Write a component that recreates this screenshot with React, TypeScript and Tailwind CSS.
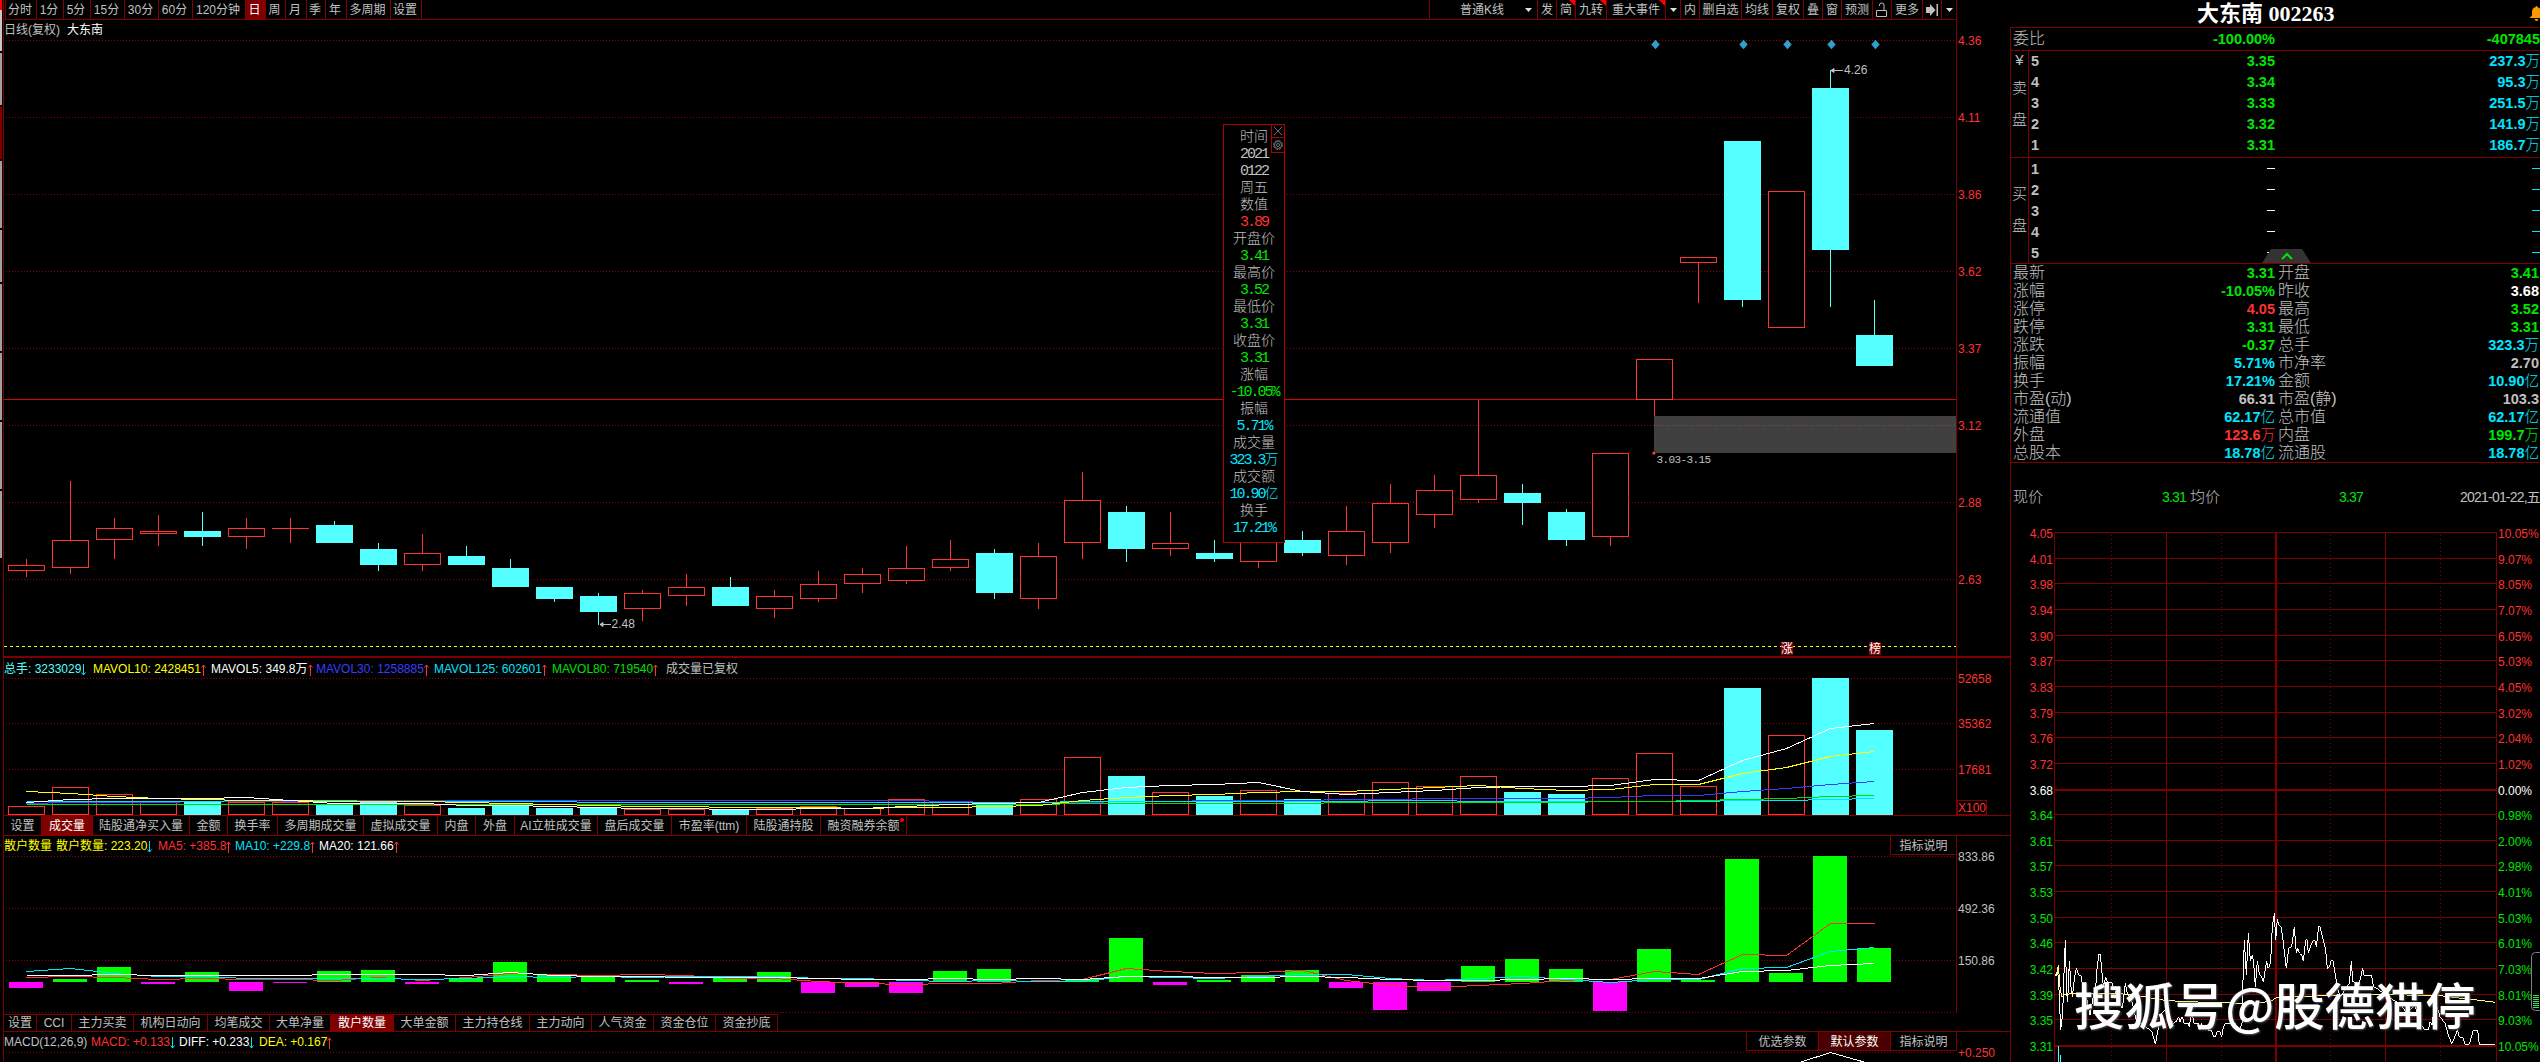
import React from "react";
import clsx from "clsx";

const periods = [
  { label: "分时", w: "w-[31px]" },
  { label: "1分", w: "w-[27px]" },
  { label: "5分", w: "w-[27px]" },
  { label: "15分", w: "w-[34px]" },
  { label: "30分", w: "w-[34px]" },
  { label: "60分", w: "w-[34px]" },
  { label: "120分钟", w: "w-[53px]" },
  { label: "日", w: "w-[20px]", active: true },
  { label: "周", w: "w-[20px]" },
  { label: "月", w: "w-[21px]" },
  { label: "季", w: "w-[19px]" },
  { label: "年", w: "w-[21px]" },
  { label: "多周期", w: "w-[44px]" },
  { label: "设置", w: "w-[31px]" },
];

const tools = [
  { label: "发", w: "w-[19px]" },
  { label: "简", w: "w-[19px]", mark: true },
  { label: "九转", w: "w-[31px]", mark: true },
  { label: "重大事件", w: "w-[59px]", mark: true },
  { icon: "down", w: "w-[15px]" },
  { label: "内", w: "w-[19px]" },
  { label: "删自选", w: "w-[42px]" },
  { label: "均线", w: "w-[31px]" },
  { label: "复权", w: "w-[31px]" },
  { label: "叠", w: "w-[19px]" },
  { label: "窗", w: "w-[19px]" },
  { label: "预测", w: "w-[31px]" },
  { icon: "lock", w: "w-[19px]" },
  { label: "更多", w: "w-[31px]" },
  { icon: "end", w: "w-[19px]" },
  { icon: "down", w: "w-[15px]" },
];

const volumeTabs = [
  { label: "设置", w: "w-[38px]" },
  { label: "成交量", w: "w-[51px]", active: true },
  { label: "陆股通净买入量", w: "w-[97px]" },
  { label: "金额", w: "w-[38px]" },
  { label: "换手率", w: "w-[50px]" },
  { label: "多周期成交量", w: "w-[86px]" },
  { label: "虚拟成交量", w: "w-[74px]" },
  { label: "内盘", w: "w-[38px]" },
  { label: "外盘", w: "w-[39px]" },
  { label: "AI立桩成交量", w: "w-[83px]" },
  { label: "盘后成交量", w: "w-[74px]" },
  { label: "市盈率(ttm)", w: "w-[75px]" },
  { label: "陆股通持股", w: "w-[74px]" },
  { label: "融资融券余额", w: "w-[86px]", dot: true },
];

const indicatorTabs = [
  { label: "设置", w: "w-[33px]" },
  { label: "CCI", w: "w-[35px]" },
  { label: "主力买卖", w: "w-[62px]" },
  { label: "机构日动向", w: "w-[74px]" },
  { label: "均笔成交", w: "w-[62px]" },
  { label: "大单净量", w: "w-[61px]" },
  { label: "散户数量", w: "w-[63px]", active: true },
  { label: "大单金额", w: "w-[62px]" },
  { label: "主力持仓线", w: "w-[74px]" },
  { label: "主力动向", w: "w-[62px]" },
  { label: "人气资金", w: "w-[62px]" },
  { label: "资金仓位", w: "w-[62px]" },
  { label: "资金抄底", w: "w-[62px]" },
];

// [up, wickTop, bodyTop, bodyBottom, wickBottom]
const candles: [number, number, number, number, number][] = [
  [1, 559, 565, 571, 577],
  [1, 481, 540, 568, 574],
  [1, 518, 528, 540, 559],
  [1, 515, 531, 534, 546],
  [0, 512, 531, 537, 546],
  [1, 518, 528, 537, 549],
  [1, 518, 528, 529, 543],
  [0, 521, 525, 543, 543],
  [0, 543, 549, 565, 571],
  [1, 534, 553, 565, 571],
  [0, 546, 556, 565, 565],
  [0, 559, 568, 587, 587],
  [0, 587, 587, 599, 602],
  [0, 593, 596, 612, 625],
  [1, 590, 593, 609, 621],
  [1, 574, 587, 596, 606],
  [0, 577, 587, 606, 606],
  [1, 590, 596, 609, 618],
  [1, 571, 584, 599, 602],
  [1, 568, 574, 584, 593],
  [1, 546, 568, 581, 584],
  [1, 540, 559, 568, 571],
  [0, 549, 553, 593, 599],
  [1, 543, 556, 599, 609],
  [1, 472, 500, 543, 559],
  [0, 506, 512, 549, 562],
  [1, 512, 543, 549, 556],
  [0, 540, 553, 559, 562],
  [1, 540, 540, 562, 568],
  [0, 531, 540, 553, 556],
  [1, 506, 531, 556, 565],
  [1, 484, 503, 543, 553],
  [1, 475, 490, 515, 528],
  [1, 400, 475, 500, 503],
  [0, 484, 493, 503, 525],
  [0, 509, 512, 540, 546],
  [1, 453, 453, 537, 546],
  [1, 359, 359, 400, 416],
  [1, 257, 257, 263, 303],
  [0, 141, 141, 300, 307],
  [1, 191, 191, 328, 328],
  [0, 70, 88, 250, 307],
  [0, 300, 335, 366, 366],
];

const volumeTops = [
  806, 787, 794, 802, 802, 802, 802, 805, 802, 805, 808, 806, 808, 808, 809,
  809, 810, 808, 806, 808, 799, 802, 802, 799, 757, 776, 792, 796, 790, 799,
  793, 782, 786, 776, 792, 794, 778, 753, 786, 688, 735, 678, 730,
];

// end of each bar, measured against the zero line at 982
const retailEnds = [
  988, 979, 967, 984, 972, 991, 983, 971, 970, 984, 978, 962, 974, 976, 980,
  984, 978, 972, 993, 987, 993, 971, 969, 982, 979, 938, 985, 980, 975, 970,
  988, 1010, 991, 966, 959, 969, 1011, 949, 980, 859, 973, 856, 948,
];

const volumeLines = [
  {
    color: "#3c3cff",
    ys: [803, 802, 802, 802, 801, 801, 801, 801, 800, 800, 800, 800, 800, 800, 800, 800, 800, 800, 800, 800, 800, 801, 802, 802, 802, 801, 801, 800, 800, 800, 799, 799, 798, 798, 798, 798, 797, 795, 795, 791, 788, 784, 781],
  },
  {
    color: "#00e5ff",
    ys: [801, 801, 801, 801, 801, 800, 800, 800, 801, 801, 801, 801, 801, 802, 802, 802, 802, 802, 802, 802, 802, 802, 802, 802, 801, 801, 801, 801, 801, 801, 801, 800, 800, 801, 801, 801, 801, 801, 801, 800, 800, 799, 798],
  },
  {
    color: "#00e000",
    ys: [804, 804, 804, 804, 804, 804, 804, 804, 804, 804, 804, 804, 804, 804, 804, 804, 804, 804, 804, 804, 804, 804, 804, 804, 803, 803, 803, 803, 803, 803, 802, 802, 802, 802, 802, 802, 801, 801, 800, 799, 798, 796, 795],
  },
  {
    color: "#ffff00",
    ys: [791, 793, 796, 798, 799, 800, 800, 801, 801, 801, 802, 803, 804, 805, 806, 806, 807, 807, 807, 808, 807, 807, 806, 805, 800, 797, 795, 794, 792, 791, 791, 789, 787, 785, 788, 790, 789, 784, 784, 773, 767, 756, 751],
  },
  {
    color: "#ffffff",
    ys: [802, 799, 798, 798, 798, 797, 800, 803, 803, 803, 805, 805, 806, 807, 808, 808, 809, 809, 808, 808, 806, 804, 803, 802, 792, 787, 785, 784, 782, 791, 794, 792, 790, 787, 786, 786, 785, 779, 780, 760, 748, 728, 723],
  },
];

const retailLines = [
  {
    color: "#ff3232",
    ys: [977, 976, 977, 979, 978, 979, 979, 980, 977, 980, 977, 973, 974, 975, 974, 975, 978, 978, 981, 983, 984, 983, 983, 980, 979, 968, 971, 973, 972, 970, 980, 985, 987, 985, 983, 980, 979, 971, 974, 954, 955, 923, 923],
  },
  {
    color: "#00e5ff",
    ys: [971, 968, 973, 976, 976, 978, 978, 978, 978, 979, 978, 976, 977, 976, 977, 976, 976, 976, 978, 978, 980, 981, 980, 981, 981, 976, 977, 978, 976, 974, 974, 978, 980, 978, 976, 979, 982, 979, 979, 968, 967, 951, 947],
  },
  {
    color: "#ffffff",
    ys: [975, 975, 974, 975, 975, 975, 975, 974, 974, 974, 975, 972, 975, 976, 976, 977, 977, 977, 978, 979, 979, 978, 979, 978, 979, 976, 976, 977, 977, 976, 977, 979, 980, 980, 979, 978, 979, 978, 978, 971, 970, 965, 963],
  },
];

const toPoints = (ys: number[]) =>
  ys.map((y, i) => `${26.5 + 44 * i},${y + 0.5}`).join(" ");

const popupRows = [
  ["时间", "text-[#c0c0c0]"],
  ["2021", "text-[#c0c0c0]"],
  ["0122", "text-[#c0c0c0]"],
  ["周五", "text-[#c0c0c0]"],
  ["数值", "text-[#c0c0c0]"],
  ["3.89", "text-[#ff3232]"],
  ["开盘价", "text-[#c0c0c0]"],
  ["3.41", "text-[#00e600]"],
  ["最高价", "text-[#c0c0c0]"],
  ["3.52", "text-[#00e600]"],
  ["最低价", "text-[#c0c0c0]"],
  ["3.31", "text-[#00e600]"],
  ["收盘价", "text-[#c0c0c0]"],
  ["3.31", "text-[#00e600]"],
  ["涨幅", "text-[#c0c0c0]"],
  ["-10.05%", "text-[#00e600]"],
  ["振幅", "text-[#c0c0c0]"],
  ["5.71%", "text-[#00e5ff]"],
  ["成交量", "text-[#c0c0c0]"],
  ["323.3万", "text-[#00e5ff]"],
  ["成交额", "text-[#c0c0c0]"],
  ["10.90亿", "text-[#00e5ff]"],
  ["换手", "text-[#c0c0c0]"],
  ["17.21%", "text-[#00e5ff]"],
];

const sells = [
  ["5", "3.35", "237.3万"],
  ["4", "3.34", "95.3万"],
  ["3", "3.33", "251.5万"],
  ["2", "3.32", "141.9万"],
  ["1", "3.31", "186.7万"],
];

const G = "text-[#00e600]";
const R = "text-[#ff3232]";
const C = "text-[#00e5ff]";
const S = "text-[#c0c0c0]";

const stats = [
  ["最新", "3.31", G, "开盘", "3.41", G],
  ["涨幅", "-10.05%", G, "昨收", "3.68", "text-white"],
  ["涨停", "4.05", R, "最高", "3.52", G],
  ["跌停", "3.31", G, "最低", "3.31", G],
  ["涨跌", "-0.37", G, "总手", "323.3万", C],
  ["振幅", "5.71%", C, "市净率", "2.70", S],
  ["换手", "17.21%", C, "金额", "10.90亿", C],
  ["市盈(动)", "66.31", S, "市盈(静)", "103.3", S],
  ["流通值", "62.17亿", C, "总市值", "62.17亿", C],
  ["外盘", "123.6万", R, "内盘", "199.7万", G],
  ["总股本", "18.78亿", C, "流通股", "18.78亿", C],
];

const minuteScale = [
  ["4.05", "10.05%"],
  ["4.01", "9.07%"],
  ["3.98", "8.05%"],
  ["3.94", "7.07%"],
  ["3.90", "6.05%"],
  ["3.87", "5.03%"],
  ["3.83", "4.05%"],
  ["3.79", "3.02%"],
  ["3.76", "2.04%"],
  ["3.72", "1.02%"],
  ["3.68", "0.00%"],
  ["3.64", "0.98%"],
  ["3.61", "2.00%"],
  ["3.57", "2.98%"],
  ["3.53", "4.01%"],
  ["3.50", "5.03%"],
  ["3.46", "6.01%"],
  ["3.42", "7.03%"],
  ["3.39", "8.01%"],
  ["3.35", "9.03%"],
  ["3.31", "10.05%"],
];

const minutePrice =
  "45,257 50,255 53,240 57,300 62,420 68,370 73,220 76,150 80,310 83,335 88,213 93,290 97,320 104,260 109,235 116,255 123,258 128,290 135,300 150,375 158,330 168,280 172,225 177,193 181,193 185,240 190,290 197,262 203,278 215,278 225,300 235,330 247,355 256,280 262,310 275,330 285,375 292,400 305,400 318,410 330,421 336,425 346,463 352,430 366,370 375,360 385,360 390,385 400,400 408,395 416,380 420,395 427,380 432,400 445,400 448,412 452,380 458,380 462,400 475,400 480,420 484,400 490,420 497,408 505,420 515,421 520,440 526,440 532,425 540,425 545,440 550,410 556,400 585,400 592,420 600,418 606,400 608,300 613,150 619,255 625,130 631,213 637,195 641,220 646,290 652,213 658,252 664,258 670,276 680,213 684,235 688,232 692,213 697,110 703,70 707,150 712,88 717,105 723,110 729,150 739,235 746,175 755,170 763,110 769,190 773,175 779,190 785,195 790,213 797,150 801,150 805,190 815,160 820,150 826,152 829,172 836,108 840,110 850,150 857,180 862,235 868,232 873,213 879,213 885,250 893,295 900,320 915,300 928,280 934,213 938,275 950,278 957,285 968,235 972,255 995,257 1000,290 1015,298 1030,310 1060,330 1080,340 1100,370 1125,345 1140,400 1155,420 1165,420 1170,395 1176,405 1185,330 1200,380 1215,400 1222,425 1235,463 1252,421 1258,440 1270,445 1274,463 1288,463 1300,421 1313,421 1318,463 1365,463";

const minuteAverage =
  "45,257 50,250 55,225 60,290 65,320 75,314 100,310 250,312 300,318 345,326 375,331 420,334 500,337 610,340 690,335 710,323 780,320 860,316 1000,313 1200,317 1290,328 1320,331 1365,337";

function ToolIcon({ icon }: { icon?: string }) {
  if (icon === "lock") {
    return (
      <svg className="h-4 w-3" viewBox="0 0 12 16" fill="none" stroke="#c0c0c0">
        <path d="M.5 8.500h10v6H.5z M3.500 4V3q0-2 2.200-2T8 3v5" />
      </svg>
    );
  }
  if (icon === "end") {
    return (
      <svg className="h-3 w-3" viewBox="0 0 12 12" fill="#c0c0c0">
        <path d="M0 3h4V0l5.500 6L4 12V9H0z M10.500 0h1.500v12h-1.500z" />
      </svg>
    );
  }
  return (
    <svg className="h-1 w-[7px]" viewBox="0 0 7 4" fill="#e0e0e0">
      <path d="M0 0h7L3.500 4z" />
    </svg>
  );
}

function TopBar() {
  return (
    <div className="flex h-5 w-[1953px] justify-between border-r border-b border-[#800000] pl-px">
      <div className="flex border-r border-[#800000]">
        {periods.map((p) => (
          <div
            key={p.label}
            className={clsx(
              "flex items-center justify-center border-l border-[#800000] pr-0.5",
              p.w,
              p.active && "bg-[#800000] text-white"
            )}
          >
            {p.label}
          </div>
        ))}
      </div>
      <div className="flex">
        <div className="flex w-[108px] items-center justify-between border-l border-[#800000] pr-[5px] pl-[30px]">
          普通K线
          <ToolIcon />
        </div>
        {tools.map((t, i) => (
          <div
            key={i}
            className={clsx(
              "relative flex items-center justify-center border-l border-[#800000]",
              t.w
            )}
          >
            {t.label ?? <ToolIcon icon={t.icon} />}
            {t.mark && (
              <svg className="absolute top-0 right-0 h-1.5 w-1.5" viewBox="0 0 6 6">
                <path d="M0 0h6v6z" fill="#ff0000" />
              </svg>
            )}
          </div>
        ))}
      </div>
    </div>
  );
}

function Grid({ ys, color = "#900000" }: { ys: number[]; color?: string }) {
  return (
    <>
      {ys.map((y) => (
        <line key={y} x1="6" x2="1955" y1={y + 0.5} y2={y + 0.5} stroke={color} strokeDasharray="1 2" />
      ))}
    </>
  );
}

function AxisLabels({ items, fill }: { items: [number, string][]; fill: string }) {
  return (
    <g fill={fill}>
      {items.map(([y, label]) => (
        <text key={y} x="1958" y={y + 5}>
          {label}
        </text>
      ))}
    </g>
  );
}

function MainChart() {
  const grid = [40, 117, 194, 271, 348, 425, 502, 579];
  return (
    <svg className="h-[620px] w-[2006px] overflow-visible text-[12px]" viewBox="4 36 2006 620" shapeRendering="crispEdges">
      <Grid ys={grid} />
      <line x1="1956.500" x2="1956.500" y1="36" y2="656" stroke="#800000" />
      <line x1="4" x2="1956" y1="399.500" y2="399.500" stroke="#e00000" />
      {candles.map(([up, wt, bt, bb, wb], i) => {
        const x = 8 + 44 * i;
        const color = up ? "#ff3232" : "#54ffff";
        return (
          <g key={i} stroke={color}>
            {wt < bt && <line x1={x + 18.5} x2={x + 18.5} y1={wt} y2={bt} />}
            {wb > bb && <line x1={x + 18.5} x2={x + 18.5} y1={bb} y2={wb} />}
            {up ? (
              <rect x={x + 0.5} y={bt + 0.5} width="36" height={Math.max(bb - bt - 1, 0.01)} fill="#000" />
            ) : (
              <rect x={x} y={bt} width="37" height={bb - bt} fill={color} stroke="none" />
            )}
          </g>
        );
      })}
      <rect x="1654" y="416" width="302" height="37" fill="#404040" />
      <line x1="1654" x2="1956" y1="425.500" y2="425.500" stroke="#8a4a4a" strokeDasharray="1 2" />
      <circle cx="1654" cy="453" r="1.500" fill="#808080" stroke="#a00000" />
      {[37, 39, 40, 41, 42].map((i) => (
        <path
          key={i}
          transform={`translate(${27.5 + 44 * i} 44.500)`}
          d="M0-4.700 4.200 0 0 4.700-4.200 0z"
          fill="#2f9fcc"
          shapeRendering="auto"
        />
      ))}
      <g stroke="#c0c0c0" fill="#c0c0c0" shapeRendering="auto">
        <path d="M1831 70.500h12M1831 70.500l3-2v4z" />
        <path d="M600 624.500h11M600 624.500l3-2v4z" />
      </g>
      <g fill="#c0c0c0">
        <text x="1844" y="74">4.26</text>
        <text x="611.500" y="628">2.48</text>
        <text x="1656.500" y="463" className="font-['Liberation_Mono',monospace] text-[11px] tracking-[-0.6px]">
          3.03-3.15
        </text>
      </g>
      <line x1="4" x2="1956" y1="646.500" y2="646.500" stroke="#ffff00" strokeDasharray="3 3" />
      <rect x="1781" y="642" width="12" height="13" fill="#800000" />
      <rect x="1869" y="642" width="12" height="13" fill="#800000" />
      <g fill="#fff" textAnchor="middle" className="text-[12px]">
        <text x="1787" y="653">涨</text>
        <text x="1875" y="653">榜</text>
      </g>
      <AxisLabels
        fill="#ff3232"
        items={[
          [40, "4.36"],
          [117, "4.11"],
          [194, "3.86"],
          [271, "3.62"],
          [348, "3.37"],
          [425, "3.12"],
          [502, "2.88"],
          [579, "2.63"],
        ]}
      />
    </svg>
  );
}

function Popup() {
  return (
    <div className="absolute top-[124px] left-[1223px] h-[419px] w-[62px] border border-[#b00000] bg-black pt-1 text-center font-['Liberation_Mono','Noto_Sans_CJK_SC',monospace] text-[14px] leading-[17px] font-light">
      {popupRows.map(([label, color], i) => (
        <div
          key={i}
          className={clsx("h-[17px] whitespace-nowrap", color, /\d/.test(label) && "text-[15px] tracking-[-2px]")}
        >
          {label.replace(/[万亿]/, "")}
          {/\d[万亿]/.test(label) && <span className="text-[14px] tracking-normal">{label.slice(-1)}</span>}
        </div>
      ))}
      <div className="absolute -top-px -right-px flex w-[14px] flex-col border border-[#b00000] bg-black">
        <svg className="h-3 w-3" viewBox="0 0 12 12" stroke="#707070" fill="none">
          <path d="M2 2l8 8M10 2l-8 8" />
        </svg>
        <svg className="h-[15px] w-3 border-t border-[#b00000]" viewBox="0 0 12 14" stroke="#707070" fill="none">
          <circle cx="6" cy="7" r="4.500" strokeDasharray="2.500 1" />
          <circle cx="6" cy="7" r="3.500" />
          <circle cx="6" cy="7" r="1.500" />
        </svg>
      </div>
    </div>
  );
}

function Arrow({ up }: { up?: boolean }) {
  return (
    <svg className="mt-0.5 h-3 w-[5px] shrink-0" viewBox="0 0 5 12" fill="none" stroke={up ? "#ff3232" : "#00e5ff"}>
      <path d={up ? "M2.500 12V1M.5 3.500l2-2.500 2 2.500" : "M2.500 0v11M.5 8.500l2 2.500 2-2.500"} />
    </svg>
  );
}

function Reading({ text, color, w, up }: { text: string; color: string; w: string; up?: boolean }) {
  return (
    <div className={clsx("flex items-center whitespace-nowrap", color, w)}>
      {text}
      <Arrow up={up} />
    </div>
  );
}

function Tabs({ items }: { items: { label: string; w: string; active?: boolean; dot?: boolean }[] }) {
  return (
    <>
      {items.map((t) => (
        <div
          key={t.label}
          className={clsx(
            "relative flex items-center justify-center border-r border-[#800000] whitespace-nowrap",
            t.w,
            t.active && "bg-[#800000] text-white"
          )}
        >
          {t.label}
          {t.dot && <span className="absolute top-0.5 right-0.5 h-1 w-1 rounded-full bg-[#ff0000]" />}
        </div>
      ))}
    </>
  );
}

function VolumeChart() {
  return (
    <svg className="h-[138px] w-[2006px] overflow-visible text-[12px]" viewBox="4 677 2006 138" shapeRendering="crispEdges">
      <Grid ys={[678, 723, 769]} />
      <line x1="1956.500" x2="1956.500" y1="677" y2="815" stroke="#800000" />
      {volumeTops.map((y, i) =>
        candles[i][0] ? (
          <rect key={i} x={8.5 + 44 * i} y={y + 0.5} width="36" height={814 - y} fill="#000" stroke="#ff3232" />
        ) : (
          <rect key={i} x={8 + 44 * i} y={y} width="37" height={815 - y} fill="#54ffff" />
        )
      )}
      {volumeLines.map((l) => (
        <polyline key={l.color} points={toPoints(l.ys)} fill="none" stroke={l.color} />
      ))}
      <rect x="1957.500" y="800.500" width="29" height="14" fill="none" stroke="#800000" />
      <AxisLabels
        fill="#ff3232"
        items={[
          [678, "52658"],
          [723, "35362"],
          [769, "17681"],
          [807, "X100"],
        ]}
      />
    </svg>
  );
}

function RetailChart() {
  return (
    <svg className="h-[159px] w-[2006px] overflow-visible text-[12px]" viewBox="4 855 2006 159" shapeRendering="crispEdges">
      <Grid ys={[856, 908, 960, 1012]} />
      <line x1="1956.500" x2="1956.500" y1="855" y2="1013" stroke="#800000" />
      {retailEnds.map((y, i) => (
        <rect
          key={i}
          x={9 + 44 * i}
          y={Math.min(y, 982)}
          width="34"
          height={Math.abs(y - 982)}
          fill={y < 982 ? "#00ff00" : "#ff00ff"}
        />
      ))}
      {retailLines.map((l) => (
        <polyline key={l.color} points={toPoints(l.ys)} fill="none" stroke={l.color} />
      ))}
      <AxisLabels
        fill="#c0c0c0"
        items={[
          [856, "833.86"],
          [908, "492.36"],
          [960, "150.86"],
        ]}
      />
    </svg>
  );
}

function MinuteChart() {
  const xs = [2166, 2385];
  const dotted = [2111, 2221, 2330, 2440];
  const lineY = (i: number) => Math.round(532 + 25.65 * i) + 0.5;
  return (
    <svg className="h-[532px] w-[529px] overflow-visible text-[12px]" viewBox="2011 530 529 532" shapeRendering="crispEdges">
      <g stroke="#800000">
        {minuteScale.map((_, i) => (
          <line key={i} x1="2054" x2="2497" y1={lineY(i)} y2={lineY(i)} strokeWidth={i === 10 || i === 20 ? 2 : 1} />
        ))}
        {[2054, 2496, ...xs].map((x) => (
          <line key={x} x1={x + 0.5} x2={x + 0.5} y1="532" y2="1062" />
        ))}
        <line x1="2276" x2="2276" y1="532" y2="1062" strokeWidth="2" />
        {dotted.map((x) => (
          <line key={x} x1={x + 0.5} x2={x + 0.5} y1="535" y2="1062" strokeDasharray="1 3" />
        ))}
      </g>
      <path d="M2058.500 1046v16M2060.500 1055v7" stroke="#54ffff" />
      <g transform="translate(2040 890) scale(.33333)" fill="none" strokeWidth="3">
        <polyline points={minutePrice} stroke="#fff" />
        <polyline points={minuteAverage} stroke="#ffff80" />
      </g>
      {minuteScale.map(([price, pct], i) => (
        <g key={i} fill={i < 10 ? "#ff3232" : i === 10 ? "#fff" : "#00e600"}>
          <text x="2053" y={lineY(i) + 5} textAnchor="end">
            {price}
          </text>
          <text x="2498" y={lineY(i) + 5}>
            {pct}
          </text>
        </g>
      ))}
      <rect x="2531.500" y="952.500" width="20" height="58" rx="4" fill="none" stroke="#808080" shapeRendering="auto" />
      <path d="M2536 995v14" stroke="#40e060" strokeWidth="6" strokeDasharray="1 1" />
    </svg>
  );
}

function QuotePanel() {
  return (
    <div className="relative flex w-[530px] flex-col overflow-hidden">
      <div className="relative flex h-[27px] items-center pl-[187px] font-['Liberation_Serif','Noto_Sans_CJK_SC',serif] text-[22px] font-bold whitespace-pre text-white">
        大东南 002263
        <svg className="absolute top-1.5 right-[-4px] h-[15px] w-[15px]" viewBox="0 0 15 15" fill="#ff9900">
          <path d="M7.500 0q1 0 1 1.200Q12 2 12 6v3.500l2.500 2.500H.5L3 9.500V6q0-4 3.500-4.800Q6.500 0 7.500 0zM5.500 13h4q-.5 2-2 2t-2-2z" />
        </svg>
      </div>
      <div className="flex grow flex-col border-t border-l border-[#800000] text-[15px]">
        <div className="flex h-[23px] items-center border-b border-[#800000] pl-0.5">
          <span className="w-[130px] text-[16px] font-light">委比</span>
          <span className="w-[132px] text-right text-[14.5px] font-bold text-[#00e600]">-100.00%</span>
          <span className="grow text-right text-[14.5px] font-bold text-[#00e600]">-407845</span>
        </div>
        <div className="flex h-[107px] border-b border-[#800000]">
          <div className="flex w-[18px] flex-col items-center border-r border-[#800000] text-[15px] leading-4 font-light">
            <span className="mt-px mb-3">¥</span>
            <span className="mb-4">卖</span>
            <span>盘</span>
          </div>
          <div className="flex grow flex-col pb-0.5">
            {sells.map(([n, price, vol]) => (
              <div key={n} className="flex grow basis-0 items-center pl-0.5 text-[14.5px] leading-4 font-bold">
                <span className="w-[130px]">{n}</span>
                <span className="w-[114px] text-right text-[#00e600]">{price}</span>
                <span className="grow text-right text-[#00e5ff]">
                  {vol.slice(0, -1)}
                  <span className="font-light">万</span>
                </span>
              </div>
            ))}
          </div>
        </div>
        <div className="relative flex h-[106px] border-b border-[#800000]">
          <div className="flex w-[18px] flex-col items-center border-r border-[#800000] text-[15px] leading-4 font-light">
            <span className="mt-7 mb-4">买</span>
            <span>盘</span>
          </div>
          <div className="flex grow flex-col">
            {["1", "2", "3", "4", "5"].map((n) => (
              <div key={n} className="flex grow basis-0 items-center pl-0.5 text-[14.5px] leading-4 font-bold">
                <span className="w-[236px]">{n}</span>
                <span className="h-px w-2 bg-white" />
                <span className="ml-auto h-px w-2 bg-[#00e5ff]" />
              </div>
            ))}
          </div>
          <svg className="absolute bottom-0 left-[251px] h-[14px] w-[49px]" viewBox="0 0 49 14">
            <path d="M9 0h31l9 14H0z" fill="#333" />
            <path d="M20 10l5-5 5 5" fill="none" stroke="#00e600" strokeWidth="2" />
          </svg>
        </div>
        <div className="flex h-[199px] flex-col border-b border-[#800000]">
          {stats.map((s) => (
            <div key={s[0]} className="flex h-[18px] items-center pl-0.5 leading-[18px]">
              <span className="w-[100px] text-[16px] font-light">{s[0]}</span>
              <Value text={s[1]} className={clsx("w-[162px]", s[2])} />
              <span className="ml-[3px] w-[100px] text-[16px] font-light">{s[3]}</span>
              <Value text={s[4]} className={clsx("grow pr-px", s[5])} />
            </div>
          ))}
        </div>
        <div className="flex h-[67px] items-center pl-0.5 text-[14px] tracking-[-0.8px]">
          <span className="w-[149px] text-[15px] font-light tracking-normal">现价</span>
          <span className="w-[28px] text-[#00e600]">3.31</span>
          <span className="w-[149px] text-[15px] font-light tracking-normal">均价</span>
          <span className="text-[#00e600]">3.37</span>
          <span className="ml-auto">2021-01-22,五</span>
        </div>
        <MinuteChart />
      </div>
      <div className="absolute top-[967px] left-[64px] font-['Noto_Sans_CJK_SC',sans-serif] text-[50.4px] leading-[74px] font-medium whitespace-nowrap text-white [text-shadow:1px_1px_2px_#555]">
        搜狐号@股德猫停
      </div>
    </div>
  );
}

function Value({ text, className }: { text: string; className: string }) {
  const unit = /[万亿]$/.test(text) ? text.slice(-1) : "";
  return (
    <span className={clsx("text-right text-[14.5px] font-bold", className)}>
      {unit ? text.slice(0, -1) : text}
      {unit && <span className="font-light">{unit}</span>}
    </span>
  );
}

function SideStrip() {
  return (
    <div className="flex w-[3px] flex-col gap-0.5 pr-px">
      <div className="h-[51px] border-t-[10px] border-[#ff0000] bg-[#c8c8c8]" />
      <div className="h-[52px] bg-[#a0a0a0]" />
      <div className="h-[52px] bg-[#800000]" />
      <div className="h-[67px] bg-[#a0a0a0]" />
      <div className="h-[52px] bg-[#a0a0a0]" />
      <div className="h-[67px] bg-[#a0a0a0]" />
      <div className="h-[67px] bg-[#a0a0a0]" />
      <div className="h-[67px] bg-[#a0a0a0]" />
      <div className="h-[67px] bg-[#a0a0a0]" />
    </div>
  );
}

export default function App() {
  return (
    <div className="relative flex h-[1062px] w-[2540px] overflow-hidden bg-black font-['Liberation_Sans','Noto_Sans_CJK_SC',sans-serif] text-[12px] leading-none text-[#c0c0c0]">
      <SideStrip />
      <div className="flex w-[2007px] flex-col border-l border-[#800000]">
        <TopBar />
        <div className="flex h-4 w-[1953px] items-end gap-[7px] border-r border-[#800000]">
          <span>日线(复权)</span>
          <span className="text-white">大东南</span>
        </div>
        <MainChart />
        <div className="h-0.5 bg-[#800000]" />
        <div className="flex h-[19px] w-[1953px] items-center border-r border-[#800000] pt-0.5">
          <Reading text="总手: 3233029" color="text-[#54ffff]" w="w-[89px]" />
          <Reading text="MAVOL10: 2428451" color="text-[#ffff00]" w="w-[118px]" up />
          <Reading text="MAVOL5: 349.8万" color="text-white" w="w-[105px]" up />
          <Reading text="MAVOL30: 1258885" color="text-[#3c3cff]" w="w-[118px]" up />
          <Reading text="MAVOL125: 602601" color="text-[#00e5ff]" w="w-[118px]" up />
          <Reading text="MAVOL80: 719540" color="text-[#00e000]" w="w-[114px]" up />
          <span>成交量已复权</span>
        </div>
        <VolumeChart />
        <div className="flex h-[21px] border-y border-[#800000]">
          <Tabs items={volumeTabs} />
        </div>
        <div className="flex h-[19px] w-[1953px] items-center border-r border-[#800000]">
          <span className="w-[52px] text-[#ffff00]">散户数量</span>
          <Reading text="散户数量: 223.20" color="text-[#ffff00]" w="w-[102px]" />
          <Reading text="MA5: +385.8" color="text-[#ff3232]" w="w-[77px]" up />
          <Reading text="MA10: +229.8" color="text-[#00e5ff]" w="w-[84px]" up />
          <Reading text="MA20: 121.66" color="text-white" w="w-[84px]" up />
          <div className="ml-auto flex h-full w-[66px] items-center justify-center border-b border-l border-[#800000] pt-0.5">
            指标说明
          </div>
        </div>
        <RetailChart />
        <div className="flex h-[18px] border-b border-[#800000]">
          <div className="flex border-t border-[#800000]">
            <Tabs items={indicatorTabs} />
          </div>
        </div>
        <div className="flex h-[19px] w-[1953px] items-center border-r border-[#800000]">
          <span className="w-[87px]">MACD(12,26,9)</span>
          <Reading text="MACD: +0.133" color="text-[#ff3232]" w="w-[88px]" />
          <Reading text="DIFF: +0.233" color="text-white" w="w-[80px]" />
          <Reading text="DEA: +0.167" color="text-[#ffff00]" w="w-[80px]" up />
          <div className="ml-auto flex h-full border-b border-l border-[#800000]">
            <div className="flex w-[72px] items-center justify-center border-r border-[#800000] pt-0.5">优选参数</div>
            <div className="flex w-[72px] items-center justify-center border-r border-[#800000] bg-[#4a0000] pt-0.5 text-white">
              默认参数
            </div>
            <div className="flex w-[65px] items-center justify-center pt-0.5">指标说明</div>
          </div>
        </div>
        <svg className="h-[11px] w-[2006px] overflow-visible text-[12px]" viewBox="4 1051 2006 11" shapeRendering="crispEdges">
          <Grid ys={[1052]} />
          <path d="M1801 1062 1830.500 1052.500 1864 1062" fill="none" stroke="#fff" />
          <AxisLabels fill="#ff3232" items={[[1052, "+0.250"]]} />
        </svg>
      </div>
      <QuotePanel />
      <Popup />
    </div>
  );
}
